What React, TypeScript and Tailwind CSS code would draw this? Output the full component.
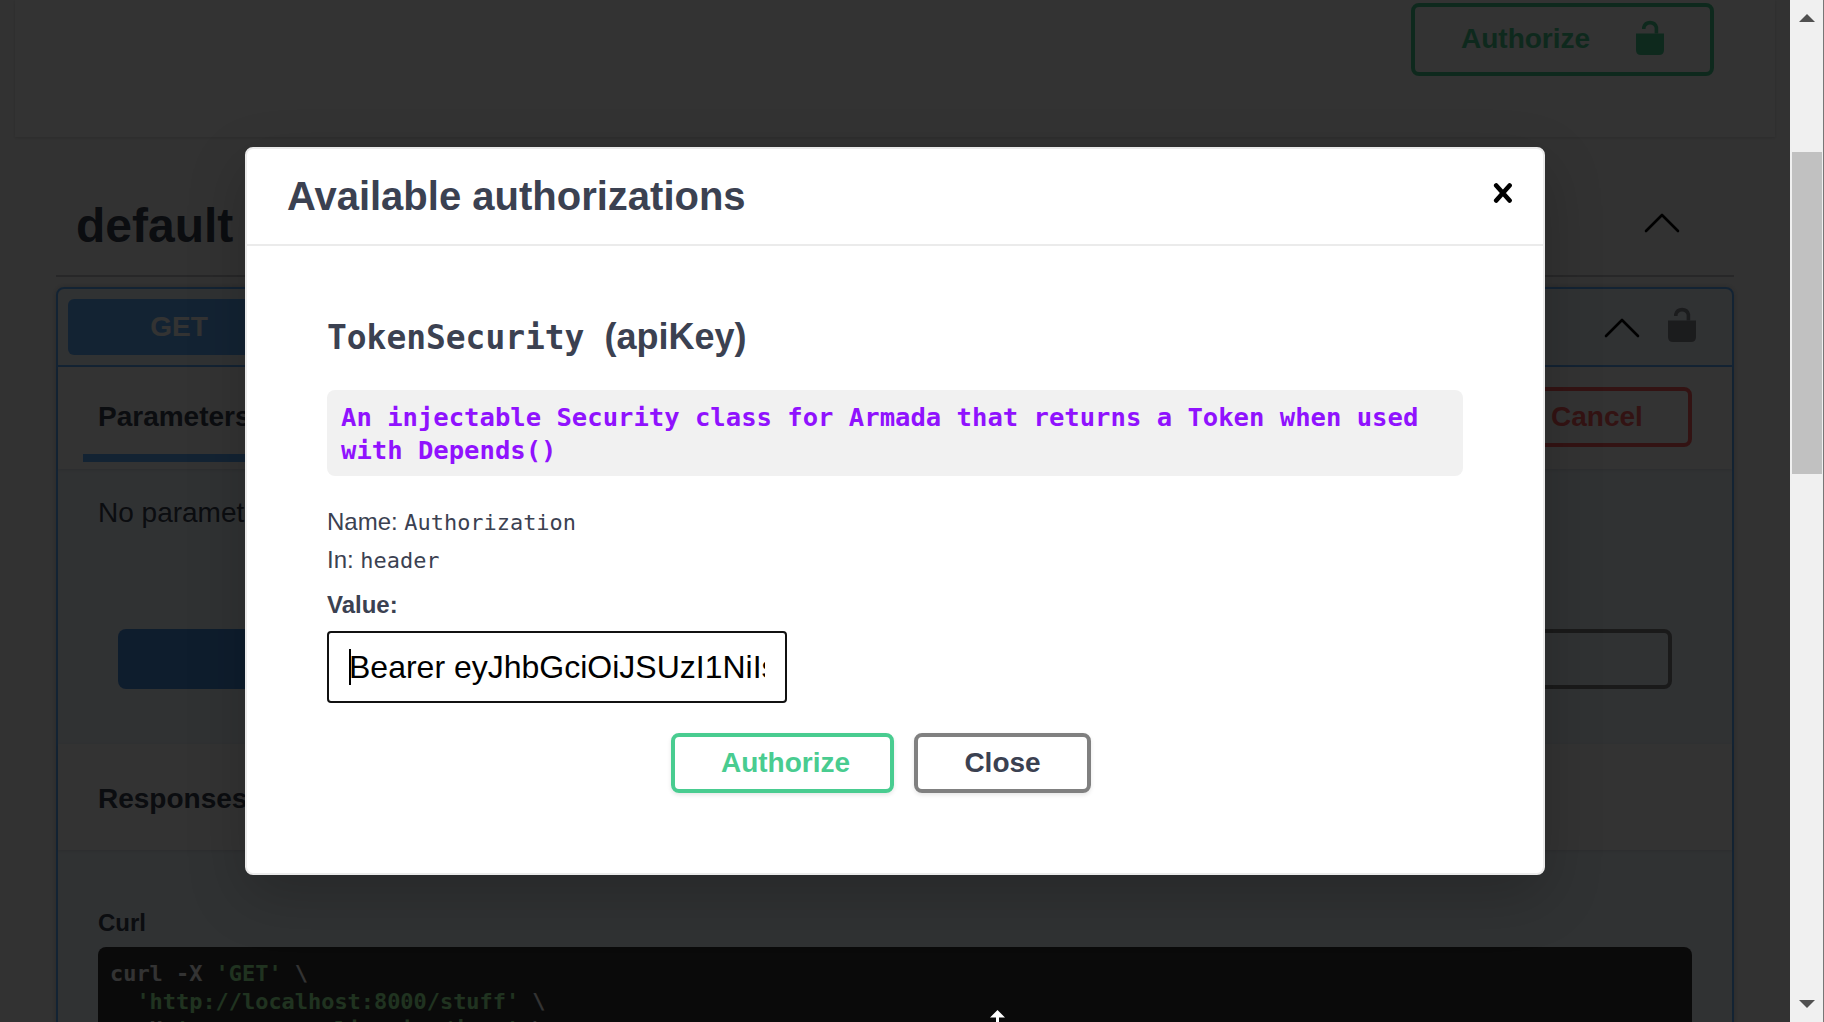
const MONO = "font-['DejaVu_Sans_Mono',monospace]";

function Chevron() {
  return (
    <svg width="36" height="20" viewBox="0 0 36 20" fill="none" stroke="#000" strokeWidth="2.6" strokeLinecap="round" strokeLinejoin="round">
      <path d="M2 18 18 2 34 18" />
    </svg>
  );
}

function Unlock({ color }: { color: string }) {
  return (
    <svg width="28" height="36" viewBox="0 0 28 36">
      <path d="M7.800 10V8.500a6.500 6.500 0 0 1 12.600 0v6" fill="none" stroke={color} strokeWidth="3.6" />
      <path d="M0 14.500H28V31Q28 36 23 36H5Q0 36 0 31Z" fill={color} />
    </svg>
  );
}

function Background() {
  return (
    <div className="h-full w-[1790px] overflow-hidden bg-[#fafafa] text-[#3b4151]">
      <div className="mx-[15px] flex h-[137px] justify-end bg-[#fcfcfc] pt-[3px] pr-[61px] shadow-[0_1px_3px_rgba(0,0,0,0.15)]">
        <div className="flex h-[73px] w-[303px] rounded-lg border-4 border-[#49cc90] text-[#49cc90]">
          <span className="ml-[46px] w-[175px] pt-px text-[28px]/[62px] font-bold">Authorize</span>
          <span className="mt-3"><Unlock color="#49cc90" /></span>
        </div>
      </div>
      <div className="mx-14 flex h-[140px] items-start justify-between border-b-2 border-[#3b4151]/30 pl-5">
        <span className="pt-[64px] text-[48px]/[50px] font-bold">default</span>
        <span className="mt-[76px] mr-[54px]"><Chevron /></span>
      </div>
      <div className="mx-14 mt-[10px] h-[900px] rounded-lg border-2 border-[#61affe] bg-[#eff7ff] shadow-[0_0_6px_rgba(0,0,0,0.19)]">
        <div className="flex h-[78px] items-start justify-between border-b-2 border-[#61affe] pl-2.5">
          <span className="mt-[10px] h-14 w-[222px] rounded-md bg-[#61affe] text-center text-[28px]/[56px] font-bold text-white">GET</span>
          <span className="flex items-start">
            <span className="mt-[29px] mr-[28px]"><Chevron /></span>
            <span className="mt-[17px] mr-[36px]"><Unlock color="#888b92" /></span>
          </span>
        </div>
        <div className="flex h-[102px] items-start justify-between bg-[#fcfcfc] pr-10 pl-[25px] shadow-[0_1px_3px_rgba(0,0,0,0.1)]">
          <div className="flex h-[95px] w-[280px] flex-col justify-between border-b-8 border-[#61affe] pl-[15px]">
            <span className="pt-[20px] text-[28px]/[60px] font-bold">Parameters</span>
          </div>
          <div className="mt-5 h-[60px] w-[194px] rounded-lg border-4 border-[#ff6060] pl-[49px] text-[28px]/[52px] font-bold text-[#ff6060]">Cancel</div>
        </div>
        <div className="h-[275px] pt-[24px]">
          <p className="pl-10 text-[28px]/[40px]">No parameters</p>
          <div className="mt-[96px] flex pr-[60px] pl-[60px]">
            <div className="h-[60px] flex-1 rounded-l-lg bg-[#4990e2]" />
            <div className="h-[60px] flex-1 rounded-r-lg border-4 border-[#808080]" />
          </div>
        </div>
        <div className="h-[106px] bg-[#fcfcfc] pl-10 shadow-[0_1px_3px_rgba(0,0,0,0.1)]">
          <span className="block pt-[25px] text-[28px]/[60px] font-bold">Responses</span>
        </div>
        <div className="px-10 pt-[57px]">
          <h5 className="text-[24px]/[32px] font-bold">Curl</h5>
          <pre className={`mt-2 h-[160px] overflow-hidden rounded-lg bg-[#333] px-3 pt-[13px] text-[21.93px]/[28px] font-bold text-white ${MONO}`}>
            curl -X <span className="text-[#a2fca2]">'GET'</span>{" \\\n  "}
            <span className="text-[#a2fca2]">'http://localhost:8000/stuff'</span>{" \\\n  -H "}
            <span className="text-[#a2fca2]">'accept: application/json'</span>{" \\"}
          </pre>
        </div>
      </div>
    </div>
  );
}

function Scrollbar() {
  return (
    <div className="flex h-full w-[34px] flex-col items-center border-r border-[#777] bg-[#f0f0f0]">
      <svg className="mt-[14px] shrink-0" width="16" height="8" viewBox="0 0 16 8"><path d="M0 8 8 0l8 8z" fill="#505050" /></svg>
      <div className="mt-[130px] h-[322px] w-[30px] bg-[#c1c1c1]" />
      <svg className="mt-auto mb-[14px] shrink-0" width="16" height="8" viewBox="0 0 16 8"><path d="M0 0h16L8 8z" fill="#505050" /></svg>
    </div>
  );
}

function AuthModal() {
  return (
    <div className="absolute top-[147px] left-[245px] h-[728px] w-[1300px] rounded-lg border-2 border-[#ebebeb] bg-white text-[#3b4151] shadow-[0_20px_60px_rgba(0,0,0,0.2)]">
      <div className="flex h-[97px] items-start justify-between border-b-2 border-[#ebebeb] pr-[30px] pl-10">
        <h3 className="pt-[23px] text-[40px]/[48px] font-bold">Available authorizations</h3>
        <svg className="mt-[33px]" width="20" height="22" viewBox="0 0 20 22" stroke="#000" strokeWidth="4.6" strokeLinecap="round">
          <path d="M3.200 3.500 16.600 18.500M16.600 3.500 3.200 18.500" />
        </svg>
      </div>
      <div className="px-20 pt-[66px]">
        <h4 className="flex h-[50px] text-[36px]/[50px] font-bold">
          <code className={`pt-px text-[32.9px]/[50px] ${MONO}`}>TokenSecurity</code>
          <span className="ml-[20px]">(apiKey)</span>
        </h4>
        <p className={`mt-[28px] h-[86px] rounded-lg bg-[#f1f1f1] pt-[11px] pl-[14px] text-[25.57px]/[33px] font-bold text-[#9012fe] ${MONO}`}>
          An injectable Security class for Armada that returns a Token when used<br />with Depends()
        </p>
        <p className="mt-[27px] h-[38px] text-[24px]/[38px]">Name: <code className={`text-[21.93px] ${MONO}`}>Authorization</code></p>
        <p className="h-[38px] text-[24px]/[38px]">In: <code className={`text-[21.93px] ${MONO}`}>header</code></p>
        <label className="mt-[8px] block text-[24px]/[36px] font-bold">Value:</label>
        <div className="mt-[8px] flex h-[72px] w-[460px] items-center rounded border-2 border-[#111] bg-white px-5 text-[32px]/[36px] text-black">
          <span className="h-9 w-0.5 shrink-0 bg-black" />
          <span className="-ml-0.5 overflow-hidden whitespace-nowrap">Bearer eyJhbGciOiJSUzI1NiIsInR5cCI6</span>
        </div>
        <div className="mt-[30px] flex gap-5 pl-[344px] text-center text-[28px]/[51px] font-bold">
          <button className="h-[60px] w-[223px] rounded-lg border-4 border-[#49cc90] pb-px pl-[6px] text-[#49cc90] shadow-[0_2px_4px_rgba(0,0,0,0.1)]">Authorize</button>
          <button className="h-[60px] w-[177px] rounded-lg border-4 border-[#808080] pb-px shadow-[0_2px_4px_rgba(0,0,0,0.1)]">Close</button>
        </div>
      </div>
    </div>
  );
}

export default function App() {
  return (
    <div className="relative flex h-[1022px] w-[1824px] overflow-hidden font-['Liberation_Sans',Arial,sans-serif]">
      <Background />
      <div className="absolute inset-y-0 left-0 w-[1790px] bg-black/80" />
      <Scrollbar />
      <AuthModal />
      <svg className="absolute top-[1010px] left-[990px]" width="15" height="12" viewBox="0 0 15 12">
        <path d="M7.500 0 15 7.500H9V12H6V7.500H0z" fill="#fff" />
      </svg>
    </div>
  );
}
